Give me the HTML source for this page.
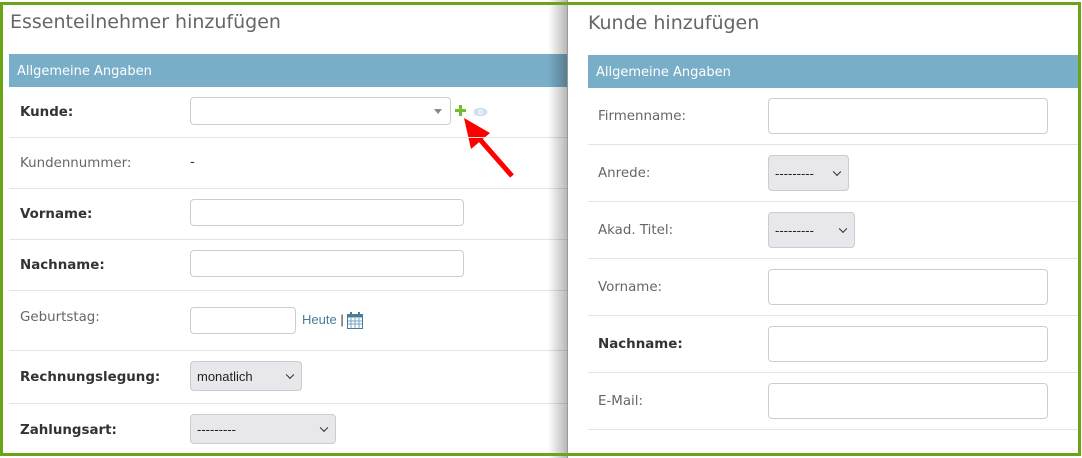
<!DOCTYPE html>
<html><head><meta charset="utf-8"><style>
*{box-sizing:border-box;margin:0;padding:0}
body{width:1082px;height:458px;overflow:hidden;background:#fff;font-family:"DejaVu Sans","Liberation Sans",sans-serif;position:relative}
.abs{position:absolute}
.h1{font-size:19px;color:#666;font-weight:normal}
.bar{background:#79aec8;color:#fff;font-size:13px;padding-left:8px;line-height:35px}
.lab{font-size:13.4px;color:#666}
.b{font-weight:bold;color:#333}
.sep{height:1px;background:#e4e4e4}
.inp{border:1px solid #ccc;border-radius:4px;background:#fff}
.sel{border:1px solid #ccc;border-radius:4px;background:#e8e8ec;font-family:"Liberation Sans",sans-serif;font-size:13px;color:#222;padding-left:6px}
.chev{position:absolute;right:8px;top:50%;width:6px;height:6px;border-right:1.5px solid #222;border-bottom:1.5px solid #222;transform:translateY(-70%) rotate(45deg)}
</style></head><body>
<div class="abs h1" style="left:10px;top:11px">Essenteilnehmer hinzufügen</div>
<div class="abs bar" style="left:9px;top:54px;width:560px;height:33px">Allgemeine Angaben</div>

<div class="abs lab b" style="left:20px;top:105px">Kunde:</div>
<div class="abs inp" style="left:190px;top:97px;width:261px;height:28px"><div style="position:absolute;right:8px;top:11px;border-left:4px solid transparent;border-right:4px solid transparent;border-top:5px solid #888"></div></div>
<div class="abs" style="left:455px;top:105px;width:11px;height:11px"><div style="position:absolute;left:4px;top:0;width:3px;height:11px;background:#70bf2b"></div><div style="position:absolute;left:0;top:4px;width:11px;height:3px;background:#70bf2b"></div></div>
<svg class="abs" style="left:473px;top:107px" width="15" height="10" viewBox="0 0 15 10"><ellipse cx="7.5" cy="5" rx="7" ry="4.3" fill="#cfe0ef"/><circle cx="7.5" cy="5" r="2.3" fill="#fff"/><circle cx="7.5" cy="5" r="1.3" fill="#cfe0ef"/></svg>
<svg class="abs" style="left:460px;top:116px" width="56" height="64" viewBox="0 0 56 64"><line x1="52" y1="60" x2="16" y2="19" stroke="#f00" stroke-width="5"/><polygon points="4,2 30,17 11,33" fill="#f00"/></svg>
<div class="abs sep" style="left:9px;top:137px;width:560px"></div>

<div class="abs lab" style="left:20px;top:156px">Kundennummer:</div>
<div class="abs lab" style="left:190px;top:155px;color:#333">-</div>
<div class="abs sep" style="left:9px;top:188px;width:560px"></div>

<div class="abs lab b" style="left:20px;top:207px">Vorname:</div>
<div class="abs inp" style="left:190px;top:199px;width:274px;height:27px"></div>
<div class="abs sep" style="left:9px;top:239px;width:560px"></div>

<div class="abs lab b" style="left:20px;top:258px">Nachname:</div>
<div class="abs inp" style="left:190px;top:250px;width:274px;height:27px"></div>
<div class="abs sep" style="left:9px;top:290px;width:560px"></div>

<div class="abs lab" style="left:20px;top:310px">Geburtstag:</div>
<div class="abs inp" style="left:190px;top:307px;width:106px;height:27px"></div>
<div class="abs" style="left:302px;top:312px;font-family:'Liberation Sans',sans-serif;font-size:13px;color:#447e9b">Heute <span style="color:#333">|</span></div>
<svg class="abs" style="left:347px;top:312px" width="16" height="17" viewBox="0 0 16 17"><rect x="0.5" y="2.5" width="15" height="14" fill="#fff" stroke="#447e9b"/><rect x="0.5" y="2.5" width="15" height="3" fill="#447e9b"/><rect x="3" y="0" width="2" height="4" fill="#447e9b"/><rect x="11" y="0" width="2" height="4" fill="#447e9b"/><path d="M4 6v10M8 6v10M12 6v10M1 9h14M1 12h14" stroke="#7aa6bd" stroke-width="1"/></svg>
<div class="abs sep" style="left:9px;top:350px;width:560px"></div>

<div class="abs lab b" style="left:20px;top:370px">Rechnungslegung:</div>
<div class="abs sel" style="left:190px;top:361px;width:112px;height:30px;line-height:29px">monatlich<div class="chev"></div></div>
<div class="abs sep" style="left:9px;top:403px;width:560px"></div>

<div class="abs lab b" style="left:20px;top:423px">Zahlungsart:</div>
<div class="abs sel" style="left:190px;top:414px;width:146px;height:30px;line-height:29px">---------<div class="chev"></div></div>

<div class="abs" style="left:548px;top:0;width:19px;height:458px;background:linear-gradient(to right,rgba(0,0,0,0),rgba(0,0,0,0.28))"></div>
<div class="abs" style="left:567px;top:0;width:515px;height:458px;background:#fff;border-left:1px solid #999"></div>
<div class="abs h1" style="left:588px;top:12px">Kunde hinzufügen</div>
<div class="abs bar" style="left:588px;top:55px;width:490px;height:33px">Allgemeine Angaben</div>

<div class="abs lab" style="left:598px;top:109px">Firmenname:</div>
<div class="abs inp" style="left:768px;top:98px;width:280px;height:36px"></div>
<div class="abs sep" style="left:588px;top:144px;width:490px"></div>

<div class="abs lab" style="left:598px;top:166px">Anrede:</div>
<div class="abs sel" style="left:768px;top:155px;width:81px;height:36px;line-height:35px">---------<div class="chev"></div></div>
<div class="abs sep" style="left:588px;top:201px;width:490px"></div>

<div class="abs lab" style="left:598px;top:223px">Akad. Titel:</div>
<div class="abs sel" style="left:768px;top:212px;width:87px;height:36px;line-height:35px">---------<div class="chev"></div></div>
<div class="abs sep" style="left:588px;top:258px;width:490px"></div>

<div class="abs lab" style="left:598px;top:280px">Vorname:</div>
<div class="abs inp" style="left:768px;top:269px;width:280px;height:36px"></div>
<div class="abs sep" style="left:588px;top:315px;width:490px"></div>

<div class="abs lab b" style="left:598px;top:337px">Nachname:</div>
<div class="abs inp" style="left:768px;top:326px;width:280px;height:36px"></div>
<div class="abs sep" style="left:588px;top:372px;width:490px"></div>

<div class="abs lab" style="left:598px;top:394px">E-Mail:</div>
<div class="abs inp" style="left:768px;top:383px;width:280px;height:36px"></div>
<div class="abs sep" style="left:588px;top:429px;width:490px"></div>

<div class="abs" style="left:0;top:2px;width:1081px;height:454px;border:3px solid #6aa516"></div>
</body></html>
